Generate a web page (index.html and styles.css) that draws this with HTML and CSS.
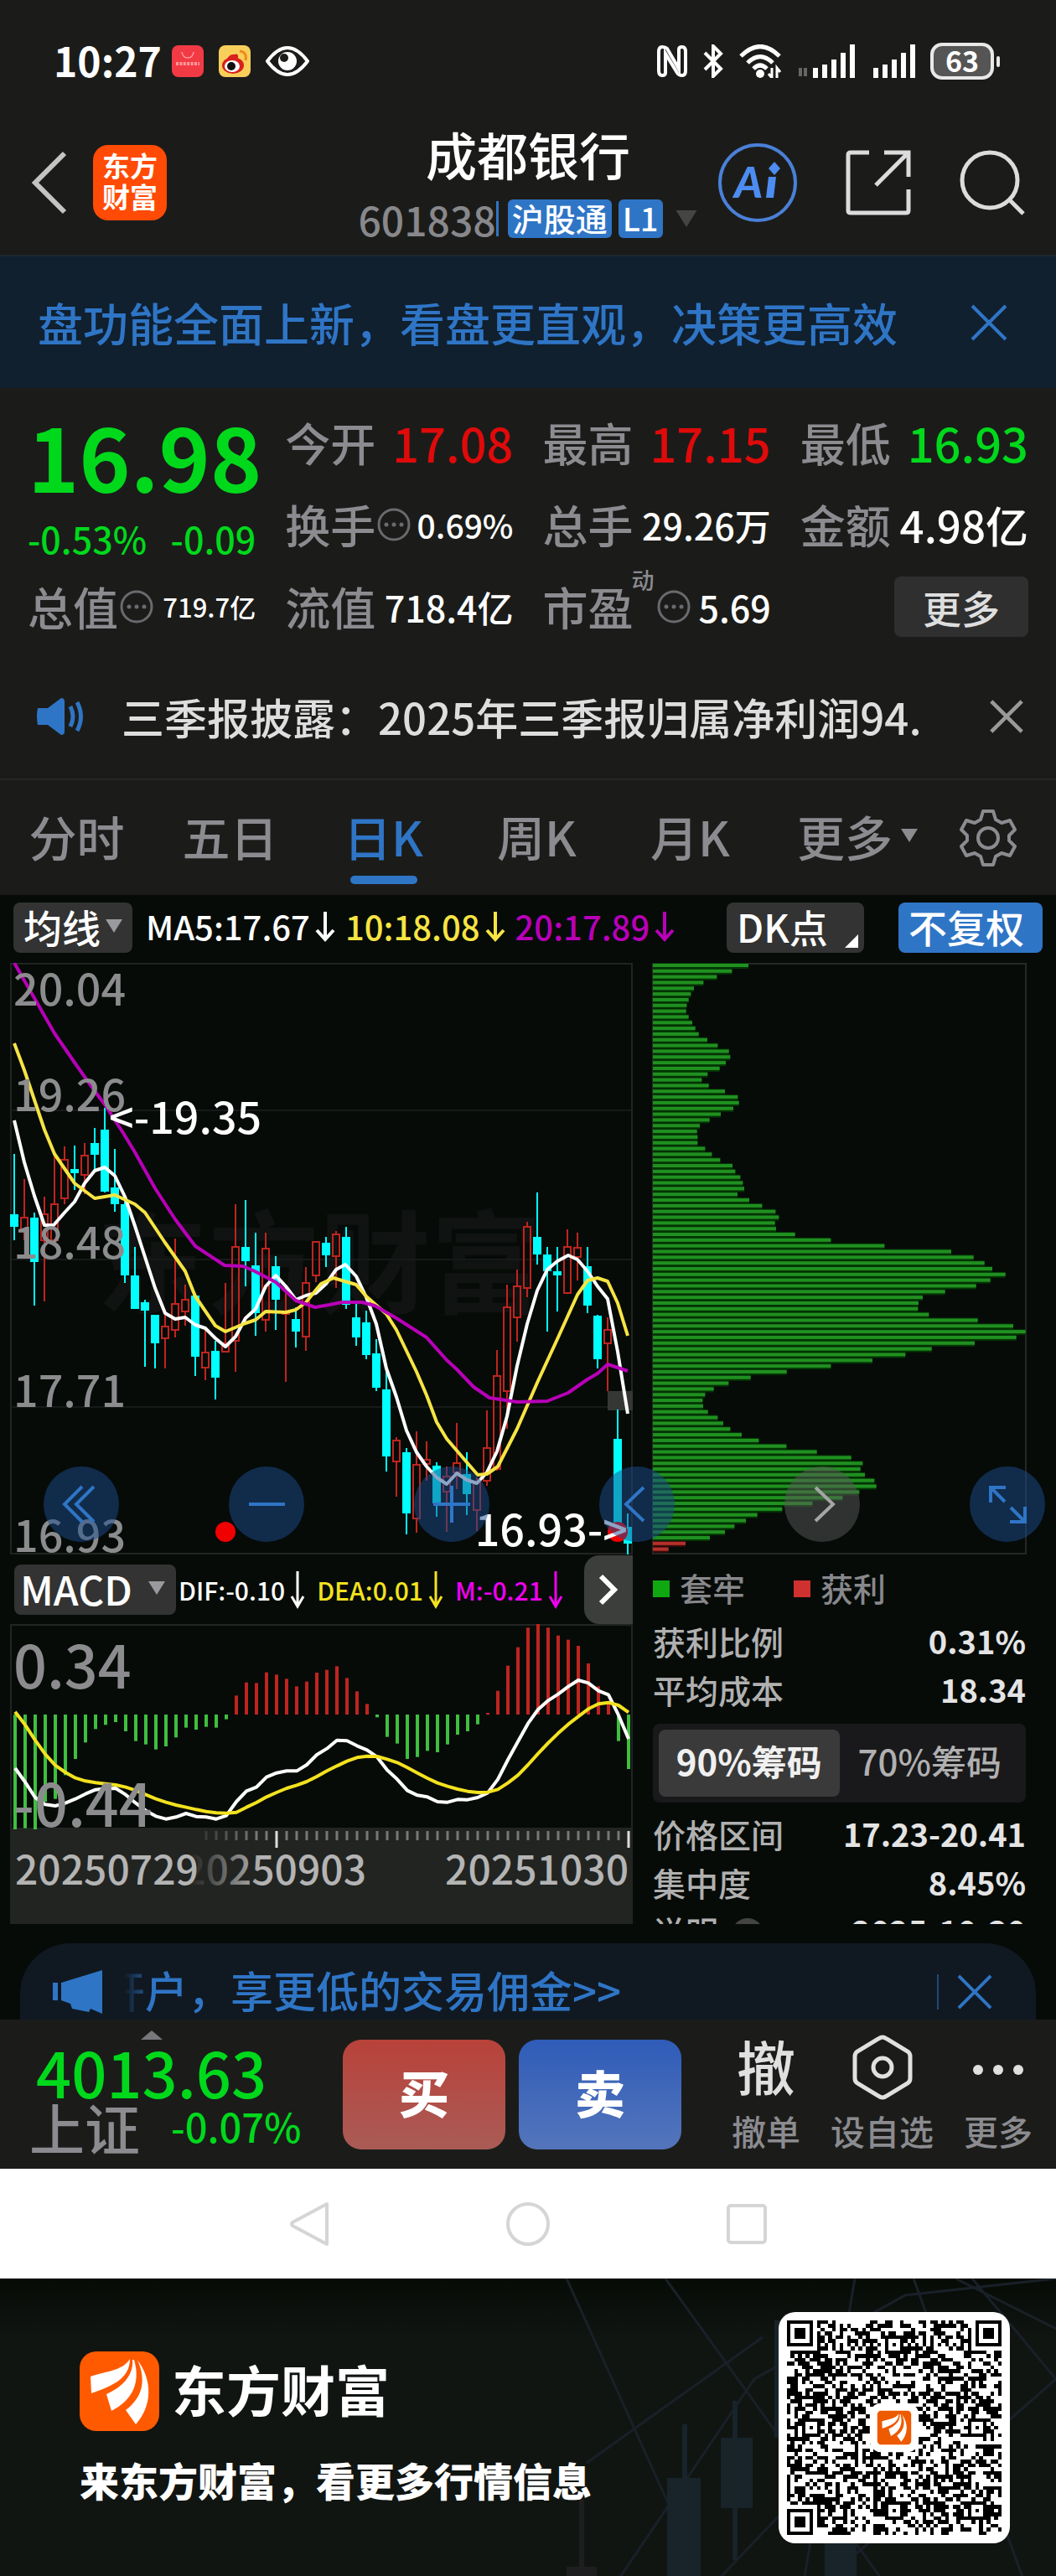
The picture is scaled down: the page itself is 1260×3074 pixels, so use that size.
FILE: index.html
```html
<!DOCTYPE html>
<html lang="zh-CN">
<head>
<meta charset="utf-8">
<meta name="viewport" content="width=device-width, initial-scale=1">
<title>成都银行 601838</title>
<link rel="stylesheet" href="styles.css">
</head>
<body>
<svg class="defs" aria-hidden="true">
  <symbol id="down" viewBox="0 0 24 38"><path d="M12 2V35M2 24L12 35L22 24" fill="none" stroke="currentColor" stroke-width="4"/></symbol>
  <symbol id="longdown" viewBox="0 0 18 46"><path d="M9 1V43M2 31L9 43L16 31" fill="none" stroke="currentColor" stroke-width="3"/></symbol>
  <symbol id="caret" viewBox="0 0 20 16"><path d="M0 0H20L10 16Z" fill="currentColor"/></symbol>
  <symbol id="close" viewBox="0 0 44 44"><path d="M2 2L42 42M42 2L2 42" fill="none" stroke="currentColor" stroke-width="4"/></symbol>
  <symbol id="info" viewBox="0 0 40 40"><circle cx="20" cy="20" r="18" fill="none" stroke="currentColor" stroke-width="3"/><g fill="currentColor"><circle cx="11" cy="20" r="2.5"/><circle cx="20" cy="20" r="2.5"/><circle cx="29" cy="20" r="2.5"/></g></symbol>
  <symbol id="leaf" viewBox="0 0 95 95"><g fill="#fff"><path d="M60 9C50 24 32 23 13 30L14 50C36 42 60 34 60 9Z"/><path d="M63 10C65 30 48 44 32 51L38 71C60 60 74 40 65 10Z"/><path d="M69 10C80 35 75 55 55 70L67 87C86 66 88 36 69 10Z"/></g></symbol>
  <symbol id="bars" viewBox="0 0 50 40"><path d="M3 40V28M14 40V24M25 40V18M36 40V10M47 40V0" stroke="#fff" stroke-width="6" fill="none"/></symbol>
</svg>

<div class="status">
  <span class="clock">10:27</span>
  <svg width="38" height="38" viewBox="0 0 38 38"><rect width="38" height="38" rx="8" fill="#f23a45"/><path d="M12 8Q13 15 19 15Q25 15 26 8" fill="none" stroke="#ff9a9a" stroke-width="1.5"/><path d="M5 22H33" stroke="#ff9a9a" stroke-width="4" stroke-dasharray="3 1.4"/></svg>
  <svg width="38" height="38" viewBox="0 0 38 38"><rect width="38" height="38" rx="8" fill="#f7cf5a"/><ellipse cx="17" cy="24" rx="13" ry="10" fill="#d8201c"/><path d="M8 20Q12 10 18 11Q24 9 23 15L17 18Z" fill="#d8201c"/><ellipse cx="16" cy="25" rx="9" ry="7" fill="#fff"/><circle cx="15" cy="25" r="5" fill="#111"/><path d="M25 7Q34 8 32 18" fill="none" stroke="#ef8a1c" stroke-width="3"/></svg>
  <svg width="52" height="38" viewBox="0 0 52 38"><path d="M2 19Q14 3 26 3T50 19Q38 35 26 35T2 19Z" fill="none" stroke="#fff" stroke-width="4"/><circle cx="26" cy="19" r="11" fill="#fff"/><circle cx="22" cy="15" r="5" fill="#1b1c1a"/></svg>
  <span class="grow"></span>
  <svg width="36" height="38" viewBox="0 0 36 38"><path d="M12 4L26 28V5Q26 2 30 2Q34 2 34 8V30Q34 36 30 36Q26 36 24 33L10 10V33Q10 36 6 36Q2 36 2 30V8Q2 2 6 2Q10 2 12 4Z" fill="none" stroke="#fff" stroke-width="4"/></svg>
  <svg width="26" height="40" viewBox="0 0 26 40"><path d="M3 10L22 29L13 38V2L22 11L3 30" fill="none" stroke="#fff" stroke-width="4"/></svg>
  <svg width="52" height="40" viewBox="0 0 52 40"><g fill="none" stroke="#fff" stroke-width="5"><path d="M2 14Q25 -9 48 14"/><path d="M10 22Q25 7 40 22"/><path d="M17 29Q25 21 33 29"/></g><circle cx="25" cy="35" r="5" fill="#fff"/><path d="M39 28V40L35 35M45 40V28L49 33" fill="none" stroke="#fff" stroke-width="3"/></svg>
  <svg class="sim" width="68" height="40" viewBox="0 0 68 40"><path d="M3 28V38M9 38V28" stroke="#666" stroke-width="4"/><use href="#bars" x="18" width="50" height="40"/></svg>
  <svg width="50" height="40"><use href="#bars"/></svg>
  <span class="battery">63</span>
</div>

<header class="top">
  <div class="left">
    <button class="icon" aria-label="返回"><svg width="44" height="76" viewBox="0 0 44 76"><path d="M40 3L5 38L40 73" fill="none" stroke="#c4c4c4" stroke-width="6"/></svg></button>
    <span class="applogo">东方<br>财富</span>
  </div>
  <div class="heading">
    <h1>成都银行</h1>
    <div class="code"><span class="num">601838</span><i></i><b>沪股通</b><b>L1</b><svg width="28" height="20" color="#444545"><use href="#caret" width="28" height="20"/></svg></div>
  </div>
  <nav class="actions">
    <button class="icon" aria-label="AI"><svg width="94" height="94" viewBox="0 0 94 94"><circle cx="47" cy="47" r="45" fill="none" stroke="#4a80d8" stroke-width="4"/><text x="36" y="65" class="ai">A</text><path d="M60 40H69L66 65H57Z" fill="#4d8cf0"/><path d="M67 22L74 30L67 38L60 30Z" fill="#4d8cf0"/></svg></button>
    <button class="icon" aria-label="分享"><svg width="78" height="78" viewBox="0 0 78 78"><path d="M28 3H6Q3 3 3 6V72Q3 75 6 75H72Q75 75 75 72V47M46 3H75V32M75 3L36 42" fill="none" stroke="#dcdcdc" stroke-width="5"/></svg></button>
    <button class="icon" aria-label="搜索"><svg width="78" height="78" viewBox="0 0 78 78"><circle cx="36" cy="36" r="33" fill="none" stroke="#dcdcdc" stroke-width="5"/><path d="M59 59L76 76" stroke="#dcdcdc" stroke-width="5"/></svg></button>
  </nav>
</header>

<div class="banner"><a href="#">盘功能全面上新，看盘更直观，决策更高效</a><button class="icon" aria-label="关闭"><svg width="44" height="44"><use href="#close"/></svg></button></div>

<section class="quote">
  <div class="price"><strong>16.98</strong><div><span>-0.53%</span><span>-0.09</span></div></div>
  <div class="cell"><span>今开</span><b class="xl red">17.08</b></div>
  <div class="cell"><span>最高</span><b class="xl red">17.15</b></div>
  <div class="cell"><span>最低</span><b class="xl green">16.93</b></div>
  <div class="cell"><span>换手</span><svg><use href="#info"/></svg><b class="s">0.69%</b></div>
  <div class="cell"><span>总手</span><b>29.26万</b></div>
  <div class="cell"><span>金额</span><b class="l">4.98亿</b></div>
  <div class="cell"><span>总值</span><svg><use href="#info"/></svg><b class="xs">719.7亿</b></div>
  <div class="cell"><span>流值</span><b>718.4亿</b></div>
  <div class="cell pe"><span>市盈<sup>动</sup></span><svg><use href="#info"/></svg><b>5.69</b></div>
  <div class="cell"><button class="more">更多</button></div>
</section>

<div class="notice">
  <svg width="60" height="48" viewBox="0 0 60 48"><path d="M2 14Q0 24 2 34H14L30 46Q34 46 34 42V6Q34 2 30 2L14 14Z" fill="#2f75c6"/><path d="M41 12Q47 24 41 36M49 7Q58 24 49 41" fill="none" stroke="#2f75c6" stroke-width="5"/></svg>
  <a href="#">三季报披露：2025年三季报归属净利润94.</a>
  <button class="icon" aria-label="关闭"><svg width="40" height="40" viewBox="0 0 44 44"><path d="M2 2L42 42M42 2L2 42" stroke="#9a9a9a" stroke-width="5"/></svg></button>
</div>

<nav class="tabs">
  <a href="#">分时</a><a href="#">五日</a><a href="#" class="on">日K</a><a href="#">周K</a><a href="#">月K</a>
  <a href="#">更多<svg width="20" height="16"><use href="#caret"/></svg></a>
  <button class="icon" aria-label="设置"><svg width="68" height="68" viewBox="0 0 68 68"><path d="M28 2H40L43 12L50 16L60 13L66 24L59 31V37L66 44L60 55L50 52L43 56L40 66H28L25 56L18 52L8 55L2 44L9 37V31L2 24L8 13L18 16L25 12Z" fill="none" stroke="#8b8b90" stroke-width="4" stroke-linejoin="round"/><circle cx="34" cy="34" r="12" fill="none" stroke="#8b8b90" stroke-width="4"/></svg></button>
</nav>

<main class="board">
  <div class="tools">
    <button class="chip">均线<svg width="20" height="16"><use href="#caret"/></svg></button>
    <div class="ma"><span>MA5:17.67<svg width="24" height="38"><use href="#down"/></svg></span><span class="yellow">10:18.08<svg width="24" height="38"><use href="#down"/></svg></span><span class="magenta">20:17.89<svg width="24" height="38"><use href="#down"/></svg></span></div>
    <button class="chip dk">DK点<svg width="16" height="16" viewBox="0 0 16 16"><path d="M16 0V16H0Z" fill="#fff"/></svg></button>
    <button class="chip blue">不复权</button>
  </div>

  <div class="charts">
    <svg class="plot" viewBox="0 0 743 706" role="img" aria-label="日K线">
      <text x="103" y="408" class="mark">东方财富</text>
      <path d="M0 176H743M0 354H743M0 530H743" stroke="#171a18" stroke-width="2"/>
      <rect x="1" y="1" width="741" height="704" fill="none" stroke="#222422" stroke-width="2"/>
      <rect x="713" y="511" width="30" height="23" fill="#353735"/>
      <g id="candles"></g>
      <g fill="none" stroke-width="4" stroke-linejoin="round">
        <polyline stroke="#fff" points="5,188 17,238 29,278 41,313 52,313 65,298 77,285 89,263 101,248 113,244 125,254 137,279 149,314 161,351 173,388 185,418 197,425 209,423 221,432 233,436 245,448 257,458 269,446 281,424 293,413 305,386 317,373 329,386 341,402 353,397 365,394 377,383 389,366 400,360 413,374 425,399 437,431 449,484 461,518 473,558 485,584 497,601 509,614 521,622 533,609 545,617 557,621 569,608 581,583 593,541 605,481 617,431 629,391 641,366 653,356 666,349 677,354 689,368 701,386 713,401 725,464 737,538"/>
        <polyline stroke="#f6e443" points="5,96 17,128 41,199 53,228 77,263 101,281 125,277 149,288 161,298 185,334 209,368 221,398 245,433 257,440 281,430 293,426 305,416 329,417 341,414 353,405 371,383 386,376 413,384 425,398 449,419 461,438 485,488 497,516 509,548 521,568 545,596 558,611 569,610 582,601 605,556 629,501 653,449 677,396 689,379 701,376 713,380 725,406 737,445"/>
        <polyline stroke="#b800b8" points="5,0 53,84 77,119 101,153 113,169 135,203 149,226 173,269 197,306 221,338 256,361 278,362 292,368 317,381 341,403 364,411 381,408 396,405 420,405 435,409 461,424 497,447 521,474 533,485 553,506 572,519 605,524 641,523 666,513 689,497 701,490 713,479 737,487"/>
      </g>
      <g class="axis"><text x="4" y="51">20.04</text><text x="4" y="177">19.26</text><text x="4" y="353">18.48</text><text x="4" y="530">17.71</text><text x="4" y="703">16.93</text></g>
      <circle cx="257" cy="679" r="12" fill="#f00000"/><circle cx="725" cy="679" r="12" fill="#f00000"/>
      <g class="tip"><text x="118" y="204">&lt;-19.35</text><text x="737" y="696" text-anchor="end">16.93-&gt;</text></g>
    </svg>
    <svg class="plot" viewBox="0 0 447 706" role="img" aria-label="筹码分布">
      <rect x="1" y="1" width="445" height="704" fill="none" stroke="#262826" stroke-width="2"/>
      <g id="dist"></g>
    </svg>
    <div class="pads">
      <button aria-label="最早"><svg viewBox="0 0 90 90"><path d="M46 24L25 45L46 66M60 24L39 45L60 66"/></svg></button>
      <button aria-label="缩小"><svg viewBox="0 0 90 90"><path d="M24 45H67"/></svg></button>
      <button aria-label="放大"><svg viewBox="0 0 90 90"><path d="M23 45H67M45 23V67"/></svg></button>
      <button aria-label="向前"><svg viewBox="0 0 90 90"><path d="M53 25L32 45L53 65"/></svg></button>
      <button class="off" aria-label="向后"><svg viewBox="0 0 90 90"><path d="M37 25L58 45L37 65"/></svg></button>
      <button aria-label="全屏"><svg viewBox="0 0 90 90"><path d="M25 43V25H43M26 26L42 42M48 66H66V48M65 65L49 49"/></svg></button>
    </div>
  </div>

  <div class="lower">
    <section class="macd">
      <div class="mtools">
        <button class="chip">MACD<svg width="20" height="16"><use href="#caret"/></svg></button>
        <div class="dif"><span>DIF:-0.10<svg width="18" height="46"><use href="#longdown"/></svg></span><span class="bright">DEA:0.01<svg width="18" height="46"><use href="#longdown"/></svg></span><span class="pink">M:-0.21<svg width="18" height="46"><use href="#longdown"/></svg></span></div>
        <button class="next" aria-label="下一项"><svg width="24" height="38" viewBox="0 0 24 38"><path d="M3 3L19 19L3 35" fill="none" stroke="#fff" stroke-width="6"/></svg></button>
      </div>
      <svg class="plot" viewBox="0 0 743 245" role="img" aria-label="MACD">
        <rect x="1" y="1" width="741" height="243" fill="none" stroke="#222422" stroke-width="2"/>
        <g id="hist"></g>
        <g id="macdlines" fill="none" stroke-width="4" stroke-linejoin="round"></g>
        <g class="axis big"><text x="4" y="77">0.34</text><text x="4" y="242">-0.44</text></g>
      </svg>
      <svg class="plot dates" viewBox="0 0 743 113" role="img" aria-label="日期">
        <defs><linearGradient id="fade" gradientUnits="userSpaceOnUse" x1="215" x2="300" y1="0" y2="0"><stop offset="0" stop-color="#b4b4b4" stop-opacity="0"/><stop offset="1" stop-color="#b4b4b4"/></linearGradient></defs>
        <g id="ticks"></g>
        <text x="6" y="66">20250729</text><text x="425" y="66" text-anchor="end" class="faded">20250903</text><text x="738" y="66" text-anchor="end">20251030</text>
      </svg>
    </section>
    <section class="cost">
      <div class="legend"><i></i>套牢<i class="r"></i>获利</div>
      <div class="row"><span>获利比例</span><b>0.31%</b></div>
      <div class="row"><span>平均成本</span><b>18.34</b></div>
      <div class="seg"><button class="on">90%筹码</button><button>70%筹码</button></div>
      <div class="row"><span>价格区间</span><b>17.23-20.41</b></div>
      <div class="row"><span>集中度</span><b>8.45%</b></div>
      <div class="row"><span>说明<i class="q"></i></span><b>2025-10-30</b></div>
    </section>
  </div>

  <div class="promo">
    <svg width="62" height="52" viewBox="0 0 62 52"><path d="M1 15H7V36H1ZM11 15L60 0V52L46 46L44 50L24 46L22 40L11 36Z" fill="#2f75c6"/></svg>
    <a href="#"><span class="fadein">开</span>户，享更低的交易佣金&gt;&gt;</a>
    <button class="icon" aria-label="关闭"><svg width="42" height="42"><use href="#close" width="42" height="42"/></svg></button>
  </div>
</main>

<footer class="trade">
  <div class="index"><svg width="26" height="11" viewBox="0 0 26 11"><path d="M0 11L13 0L26 11Z" fill="#77777c"/></svg><strong>4013.63</strong><div><span>上证</span><b>-0.07%</b></div></div>
  <button class="buy">买</button><button class="sell">卖</button>
  <nav class="acts">
    <a href="#"><span class="glyph">撤</span>撤单</a>
    <a href="#"><svg width="72" height="80" viewBox="0 0 72 80"><path d="M36 4Q38 4 41 6L66 21Q69 23 69 27V53Q69 57 66 59L41 74Q36 78 31 74L6 59Q3 57 3 53V27Q3 23 6 21L31 6Q34 4 36 4Z" fill="none" stroke="#e0e0e0" stroke-width="5"/><circle cx="36" cy="40" r="11" fill="none" stroke="#e0e0e0" stroke-width="5"/></svg>设自选</a>
    <a href="#"><svg width="62" height="80" viewBox="0 0 62 80" fill="#e0e0e0"><circle cx="7" cy="43" r="6"/><circle cx="31" cy="43" r="6"/><circle cx="55" cy="43" r="6"/></svg>更多</a>
  </nav>
</footer>

<nav class="sysnav">
  <button class="icon" aria-label="后退"><svg width="48" height="56" viewBox="0 0 48 56"><path d="M45 4V52L4 30Q2 28 4 26Z" fill="none" stroke="#d6d4d7" stroke-width="4" stroke-linejoin="round"/></svg></button>
  <button class="icon" aria-label="主页"><svg width="54" height="54" viewBox="0 0 54 54"><circle cx="27" cy="27" r="24" fill="none" stroke="#d6d4d7" stroke-width="4"/></svg></button>
  <button class="icon" aria-label="任务"><svg width="48" height="50" viewBox="0 0 48 50"><rect x="2" y="3" width="44" height="44" rx="3" fill="none" stroke="#d6d4d7" stroke-width="4"/></svg></button>
</nav>

<section class="share">
  <svg class="decor" viewBox="0 0 600 356" preserveAspectRatio="xMaxYMid slice" aria-hidden="true">
    <g fill="none" stroke="#1a2028" stroke-width="3"><path d="M16 0L138 270M134 0L390 356M40 220L250 70M330 356L600 120M80 356L240 120L420 20L600 0M200 356L330 220M360 0L300 356M430 0L560 356M480 0L600 60M500 0L600 120"/></g>
    <g fill="#18232a"><rect x="136" y="238" width="40" height="118"/><rect x="154" y="174" width="6" height="70"/><rect x="200" y="190" width="38" height="84"/><rect x="214" y="146" width="6" height="190"/><rect x="324" y="310" width="38" height="46"/><rect x="264" y="50" width="20" height="140"/></g>
    <g fill="#1e1e20"><rect x="31" y="264" width="6" height="92"/><rect x="16" y="344" width="36" height="12"/></g>
  </svg>
  <div class="brand">
    <div><svg class="logo" width="95" height="95"><use href="#leaf"/></svg><strong>东方财富</strong></div>
    <p>来东方财富，看更多行情信息</p>
  </div>
  <div class="qr"><svg viewBox="0 0 57 57" role="img" aria-label="二维码"><path id="modules" shape-rendering="crispEdges"/><rect x="22" y="22" width="13" height="13" rx="3" fill="#fff"/><rect x="24" y="24" width="9" height="9" rx="1" fill="#ee5a00"/><use href="#leaf" x="24" y="24" width="9" height="9"/></svg></div>
</section>
<script src="charts.js"></script>
</body>
</html>
```
FILE: charts.js
```js
// Each candle: [rising, high, bodyTop, bodyBottom, low] on the chart's own scale.
const candles = [
  [0,228,300,315,331],[1,258,304,318,331],[0,298,304,357,409],[1,279,300,331,404],[1,229,288,331,333],
  [1,219,235,281,288],[0,218,246,251,271],[1,215,230,253,276],[0,197,215,229,248],[0,173,199,273,274],
  [0,222,268,288,297],[0,280,288,373,382],[0,339,373,413,413],[0,402,405,415,482],[0,420,420,454,484],
  [1,419,434,448,484],[1,329,407,438,447],[1,384,402,416,433],[0,396,397,470,493],[1,438,465,483,498],
  [0,451,463,495,521],[1,382,454,464,464],[1,288,339,451,488],[0,283,339,356,386],[0,322,361,418,445],
  [1,322,341,426,440],[0,350,362,402,438],[1,386,416,419,500],[0,411,425,440,459],[1,363,382,446,463],
  [1,332,333,373,381],[0,327,334,349,363],[1,320,324,350,388],[0,315,327,408,413],[0,406,423,447,457],
  [0,415,429,468,473],[0,449,466,507,511],[0,481,509,589,607],[1,566,570,595,637],[0,579,584,657,682],
  [1,559,599,663,680],[1,571,593,598,618],[0,596,600,645,661],[1,601,613,631,679],[1,549,597,608,628],
  [0,584,610,634,659],[1,614,619,653,678],[1,534,579,618,624],[1,462,493,604,606],[1,384,411,511,556],
  [1,366,386,423,452],[1,309,315,388,399],[0,274,327,348,360],[0,339,348,368,440],[0,339,368,373,416],
  [1,318,339,394,394],[1,322,340,351,379],[0,339,362,409,418],[0,420,421,473,484],[1,423,438,454,511],
  [0,533,568,668,678],[0,657,673,693,706]
];
const X0 = 5, STEP = 12;
document.getElementById('candles').innerHTML = candles.map(([up, h, t, b, l], i) => {
  const x = X0 + i * STEP;
  return up
    ? `<path d="M${x} ${h}V${t}M${x} ${b}V${l}M${x - 4} ${t}H${x + 4}V${b}H${x - 4}Z" fill="none" stroke="#c0241f" stroke-width="2"/>`
    : `<path d="M${x} ${h}V${l}" stroke="#00ffff" stroke-width="2"/><rect x="${x - 5}" y="${t}" width="10" height="${b - t}" fill="#00ffff"/>`;
}).join('');

// Share of chips held at each price step, top to bottom; the last two are in profit.
const chips = [400,341,287,239,205,194,186,179,177,186,199,210,222,253,290,330,335,319,297,254,233,258,316,362,366,346,301,261,226,216,218,218,245,269,299,343,353,371,380,385,361,403,449,497,509,495,499,567,695,887,1126,1206,1245,1273,1320,1266,1215,1104,1024,1009,1007,1046,1221,1348,1392,1359,1210,1056,962,844,695,537,408,329,276,245,236,238,255,290,310,335,376,437,536,645,768,809,801,817,851,858,797,737,629,521,432,391,350,316,262,175,114];
document.getElementById('dist').innerHTML = chips.map((v, i) => {
  const w = (v - 58) / 3, y = 1 + i * 6.83, red = i > 100;
  return `<rect x="1" y="${y - 1}" width="${w}" height="7" fill="${red ? '#3a0c0c' : '#043604'}"/><rect x="1" y="${y}" width="${w}" height="4" fill="${red ? '#b5302c' : '#209020'}"/>`;
}).join('');

const toY = v => v / 3 - 88;
const hist = [1000,995,1000,900,890,805,747,688,640,625,615,648,683,695,713,702,670,635,642,632,635,605,520,473,475,437,445,460,487,470,438,428,415,457,505,550,598,668,692,747,740,718,723,695,660,648,623,582,503,413,347,277,263,277,305,320,342,405,487,540,683,783];
document.getElementById('hist').innerHTML = hist.map((v, i) =>
  `<path d="M${6 + i * STEP} 108V${toY(v)}" stroke="${v > 588 ? '#3fbf3f' : '#c0241f'}" stroke-width="4"/>`).join('');
const dif = [780,830,885,910,915,905,890,872,857,853,852,875,905,932,952,962,955,942,953,955,962,950,900,862,848,812,797,790,790,768,732,710,680,682,700,715,740,787,820,860,877,883,900,902,892,893,885,868,820,750,685,620,570,538,515,488,465,475,503,517,590,675];
const dea = [578,625,680,730,770,795,815,826,832,836,840,848,860,875,890,902,912,920,928,935,940,941,938,920,903,883,867,852,841,828,810,790,772,755,742,737,738,748,760,778,797,816,833,845,855,863,867,866,856,833,805,768,728,690,655,623,595,568,550,545,555,580];
const line = (data, c) => `<polyline stroke="${c}" points="${data.map((v, i) => `${6 + i * STEP},${toY(v)}`).join(' ')}"/>`;
document.getElementById('macdlines').innerHTML = line(dif, '#fff') + line(dea, '#f3e21f');

let ticks = '';
for (let i = 19; i < 62; i++) {
  const major = i === 26 || i === 61;
  ticks += `<path d="M${6 + i * STEP} 2V${major ? 22 : 13}" stroke="${major ? '#ddd' : '#777'}" stroke-width="3" opacity="${Math.min(1, (i - 17) / 7)}"/>`;
}
document.getElementById('ticks').innerHTML = ticks;

// QR modules: finder squares, alignment squares, timing rows and data cells.
const N = 57, marks = [6, 28, 50];
let seed = 601838, d = '';
const rnd = () => (seed = (seed * 1103515245 + 12345) % 2147483648) / 2147483648;
for (let y = 0; y < N; y++) for (let x = 0; x < N; x++) {
  let on = rnd() < 0.5;
  if (x === 6 || y === 6) on = (x + y) % 2 === 0;
  for (const a of marks) for (const b of marks) {
    const r = Math.max(Math.abs(x - a), Math.abs(y - b));
    if (r <= 2) on = r !== 1;
  }
  for (const [a, b] of [[3, 3], [53, 3], [3, 53]]) {
    const r = Math.max(Math.abs(x - a), Math.abs(y - b));
    if (r <= 4) on = r !== 2 && r !== 4;
  }
  if (on) d += `M${x} ${y}h1v1h-1z`;
}
document.getElementById('modules').setAttribute('d', d);
```
FILE: styles.css
```css
* { box-sizing: border-box; }
body { margin: 0; background: #1b1c1a; color: #fff; font-family: "Noto Sans CJK SC", sans-serif; font-weight: 500; }
a { color: inherit; text-decoration: none; }
button { font: inherit; color: inherit; border: 0; padding: 0; background: none; }
svg { display: block; flex: none; }
b, strong { font-weight: 500; }
.defs { position: absolute; width: 0; height: 0; }
.icon { display: flex; flex: none; }
.grow { flex: 1; }
.red { color: #e00a0a; }
.green { color: #00d81c; }

.status { display: flex; align-items: center; gap: 18px; height: 146px; padding: 0 74px 0 64px; }
.clock { font-size: 48px; line-height: 60px; margin-bottom: 4px; font-weight: 700; margin-right: -6px; }
.sim { margin-right: 4px; }
.battery { position: relative; width: 76px; height: 44px; border: 4px solid #e8e8e8; border-radius: 14px; background: #555; font-size: 34px; font-weight: 700; line-height: 34px; text-align: center; }
.battery::after { content: ""; position: absolute; right: -11px; top: 12px; width: 4px; height: 13px; border-radius: 2px; background: #e8e8e8; }

.top { display: grid; grid-template-columns: 1fr auto 1fr; align-items: center; height: 160px; padding: 0 37px 14px; border-bottom: 2px solid #1f262c; }
.left { display: flex; align-items: center; gap: 30px; }
.applogo { width: 88px; height: 90px; border-radius: 18px; background: #ff4b05; font-size: 33px; line-height: 37px; padding-top: 6px; text-align: center; font-weight: 700; }
.heading { display: flex; flex-direction: column; align-items: center; }
h1 { margin: 0; font-size: 61px; line-height: 64px; font-weight: 500; }
.code { display: flex; align-items: center; height: 46px; margin-top: 22px; }
.code .num { font-size: 48px; line-height: 46px; color: #88888c; font-weight: 500; }
.code i { width: 3px; height: 42px; background: #2f75c6; margin-right: 11px; }
.code b { height: 46px; padding: 0 5px; margin-right: 8px; border-radius: 6px; background: #2f75c6; font-size: 38px; line-height: 44px; }
.code svg { margin-left: 6px; }
.actions { display: flex; align-items: center; justify-content: flex-end; gap: 58px; }
.ai { font-family: Lato, sans-serif; font-weight: 900; font-style: italic; font-size: 52px; fill: #4d8cf0; text-anchor: middle; }

.banner { display: flex; align-items: center; justify-content: space-between; height: 157px; padding: 0 58px 0 45px; background: #10202f; color: #2f75c6; font-size: 54px; line-height: 60px; }

.quote { display: grid; grid-template-columns: repeat(4, minmax(0, 1fr)); grid-auto-rows: 98px; column-gap: 35px; padding: 16px 33px 0; font-size: 43px; }
.cell { display: flex; align-items: center; white-space: nowrap; }
.cell span { position: relative; font-size: 54px; line-height: 60px; color: #8b8b90; }
.cell sup { position: absolute; left: 106px; top: -22px; font-size: 27px; line-height: 40px; }
.cell svg { width: 40px; height: 40px; color: #6a6a6e; margin-left: 2px; }
.pe svg { margin-left: 28px; }
.cell b { margin-left: auto; line-height: 60px; }
.cell .xl { font-size: 56px; }
.cell .l { font-size: 51px; }
.cell .s { font-size: 39px; }
.cell .xs { font-size: 31px; }
.price { grid-row: span 2; color: #00d81c; }
.price strong { display: block; font-size: 104px; line-height: 128px; font-weight: 700; text-align: center; }
.price div { display: flex; justify-content: space-between; font-size: 43px; line-height: 60px; margin-top: 5px; }
.more { margin-left: auto; width: 160px; height: 72px; border-radius: 8px; background: #2f2f30; color: #dedede; font-size: 46px; line-height: 66px; }

.notice { display: flex; align-items: center; height: 158px; padding: 8px 39px 0 43px; border-bottom: 2px solid #262725; color: #dedede; font-size: 51px; line-height: 60px; white-space: nowrap; }
.notice a { margin: 0 auto 0 42px; }

.tabs { display: grid; grid-template-columns: repeat(5, 183fr) 216fr 96fr; height: 137px; padding-right: 33px; color: #8b8b90; font-size: 57px; line-height: 64px; }
.tabs a { position: relative; display: flex; align-items: center; justify-content: center; gap: 10px; padding-bottom: 6px; }
.tabs button { align-items: center; justify-content: center; }
.tabs .on { color: #2f75c6; }
.tabs .on::after { content: ""; position: absolute; left: 50%; bottom: 13px; width: 80px; height: 10px; margin-left: -40px; border-radius: 5px; background: #2f75c6; }

.board { background: #060b08; padding-top: 9px; }
.tools { display: flex; align-items: flex-start; height: 72px; padding: 0 16px; }
.chip { display: flex; align-items: center; justify-content: space-between; flex: none; width: 142px; height: 60px; padding: 0 12px 4px; border-radius: 8px; background: #323332; font-size: 46px; line-height: 56px; color: #fff; }
.chip svg { color: #9a9a9e; }
.ma { display: flex; flex: 1; gap: 12px; padding-left: 16px; font-size: 40px; line-height: 56px; white-space: nowrap; }
.ma span { display: flex; align-items: center; gap: 6px; }
.yellow { color: #f6e443; }
.magenta { color: #b800b8; }
.dk { width: 164px; margin-right: 41px; padding-right: 7px; }
.dk svg { align-self: flex-end; margin-bottom: 2px; }
.blue { width: 172px; background: #2f75c6; }

.charts { position: relative; display: grid; grid-template-columns: minmax(0, 743fr) minmax(0, 447fr); column-gap: 23px; padding: 0 35px 0 12px; }
.plot { width: 100%; height: auto; }
.plot text { fill: #8c8c8e; font-size: 52px; font-weight: 500; }
.plot .mark { font-size: 133px; font-weight: 700; fill: #101311; }
.plot .tip text { fill: #fff; }
.plot .big text { font-size: 70px; }
.plot.dates { background: #222422; }
.plot.dates text { font-size: 48px; fill: #b4b4b4; }
.plot.dates .faded { fill: url(#fade); }
.pads { position: absolute; left: 52px; right: 13px; bottom: 15px; display: flex; justify-content: space-between; }
.pads button { width: 90px; height: 90px; border-radius: 50%; background: rgba(28, 76, 142, .5); }
.pads .off { background: rgba(90, 90, 90, .5); }
.pads path { fill: none; stroke: #2f75c6; stroke-width: 4px; }
.pads .off path { stroke: #a5a5a5; }

.lower { display: grid; grid-template-columns: minmax(0, 743fr) minmax(0, 447fr); column-gap: 23px; height: 441px; padding: 0 35px 0 12px; overflow: hidden; }
.mtools { display: flex; align-items: center; height: 83px; padding-left: 5px; }
.mtools .chip { width: 193px; padding: 0 13px 4px 7px; font-size: 48px; }
.dif { display: flex; flex: 1; gap: 14px; padding-left: 3px; font-size: 30px; line-height: 50px; white-space: nowrap; }
.dif span { display: flex; align-items: center; gap: 6px; }
.bright { color: #f3e21f; }
.pink { color: #f000f0; }
.next { display: flex; align-items: center; justify-content: center; width: 58px; height: 82px; border-radius: 18px 0 0 18px; background: #3c3e3b; }

.cost { color: #b0b0b0; font-size: 39px; }
.legend { display: flex; align-items: center; height: 72px; padding-top: 5px; color: #88888c; line-height: 50px; }
.legend i { width: 20px; height: 20px; margin: 4px 12px 0 1px; background: #10a810; }
.legend .r { margin-left: 58px; background: #cf3030; }
.row { display: flex; justify-content: space-between; height: 58px; line-height: 58px; padding: 0 1px; }
.row b { color: #e4e4e4; font-size: 38px; font-weight: 700; }
.legend + .row { margin-top: 2px; }
.q { display: inline-block; width: 38px; height: 38px; margin-left: 16px; border-radius: 50%; background: #444; vertical-align: -6px; }
.seg { display: grid; grid-template-columns: 1fr 1fr; height: 94px; margin: 12px 1px 8px; padding: 7px; border-radius: 8px; background: #19191b; }
.seg button { border-radius: 8px; font-size: 42px; line-height: 74px; padding-bottom: 6px; }
.seg .on { background: #3a3a3a; color: #f0f0f0; font-weight: 700; }

.promo { display: flex; align-items: center; height: 91px; margin: 23px 24px 0; padding: 24px 52px 0 38px; border-radius: 60px 60px 0 0; background: #101922; color: #2f75c6; font-size: 51px; line-height: 60px; white-space: nowrap; }
.promo a { margin: 0 auto 0 -2px; padding-bottom: 6px; }
.promo .icon { padding-left: 22px; border-left: 2px solid #1f4a7a; }
.fadein { background: linear-gradient(90deg, transparent 50%, #2f75c6 130%); background-clip: text; -webkit-background-clip: text; color: transparent; }

.trade { display: flex; align-items: flex-start; height: 178px; padding: 13px 28px 0 35px; }
.index { width: 374px; color: #00d81c; }
.index svg { margin-left: 133px; }
.index strong { display: block; font-size: 74px; line-height: 76px; padding-left: 8px; }
.index div { display: flex; align-items: center; gap: 37px; line-height: 54px; }
.index span { font-size: 66px; color: #8b8b90; }
.index b { font-size: 47px; }
.buy, .sell { width: 194px; height: 131px; margin: 11px 16px 0 0; padding-bottom: 8px; border-radius: 22px; font-size: 60px; font-weight: 900; }
.buy { background: linear-gradient(#b8423a, #aa5b56); }
.sell { background: linear-gradient(#2f5cb8, #5475bb); }
.acts { display: flex; flex: 1; justify-content: flex-end; gap: 36px; }
.acts a { display: flex; flex-direction: column; align-items: center; color: #8b8b90; font-size: 41px; line-height: 52px; white-space: nowrap; }
.acts svg, .glyph { height: 80px; margin: 4px 0 9px; }
.glyph { font-size: 70px; line-height: 76px; color: #e0e0e0; }

.sysnav { display: flex; align-items: center; justify-content: center; gap: 210px; height: 131px; background: #fff; }

.share { position: relative; display: flex; align-items: center; justify-content: space-between; height: 356px; padding: 0 55px 0 95px; background: linear-gradient(#060b06, #101512 20%); }
.decor { position: absolute; right: 0; top: 0; width: 600px; height: 100%; }
.brand { position: relative; }
.brand div { display: flex; align-items: center; gap: 15px; }
.logo { border-radius: 20px; background: #ff5a00; }
.brand strong { font-size: 65px; line-height: 90px; font-weight: 700; padding-bottom: 6px; }
.brand p { margin: 28px 0 0; font-size: 47px; line-height: 60px; font-weight: 900; }
.qr { position: relative; width: 276px; height: 276px; padding: 10px; border-radius: 20px; background: #fff; }
```
